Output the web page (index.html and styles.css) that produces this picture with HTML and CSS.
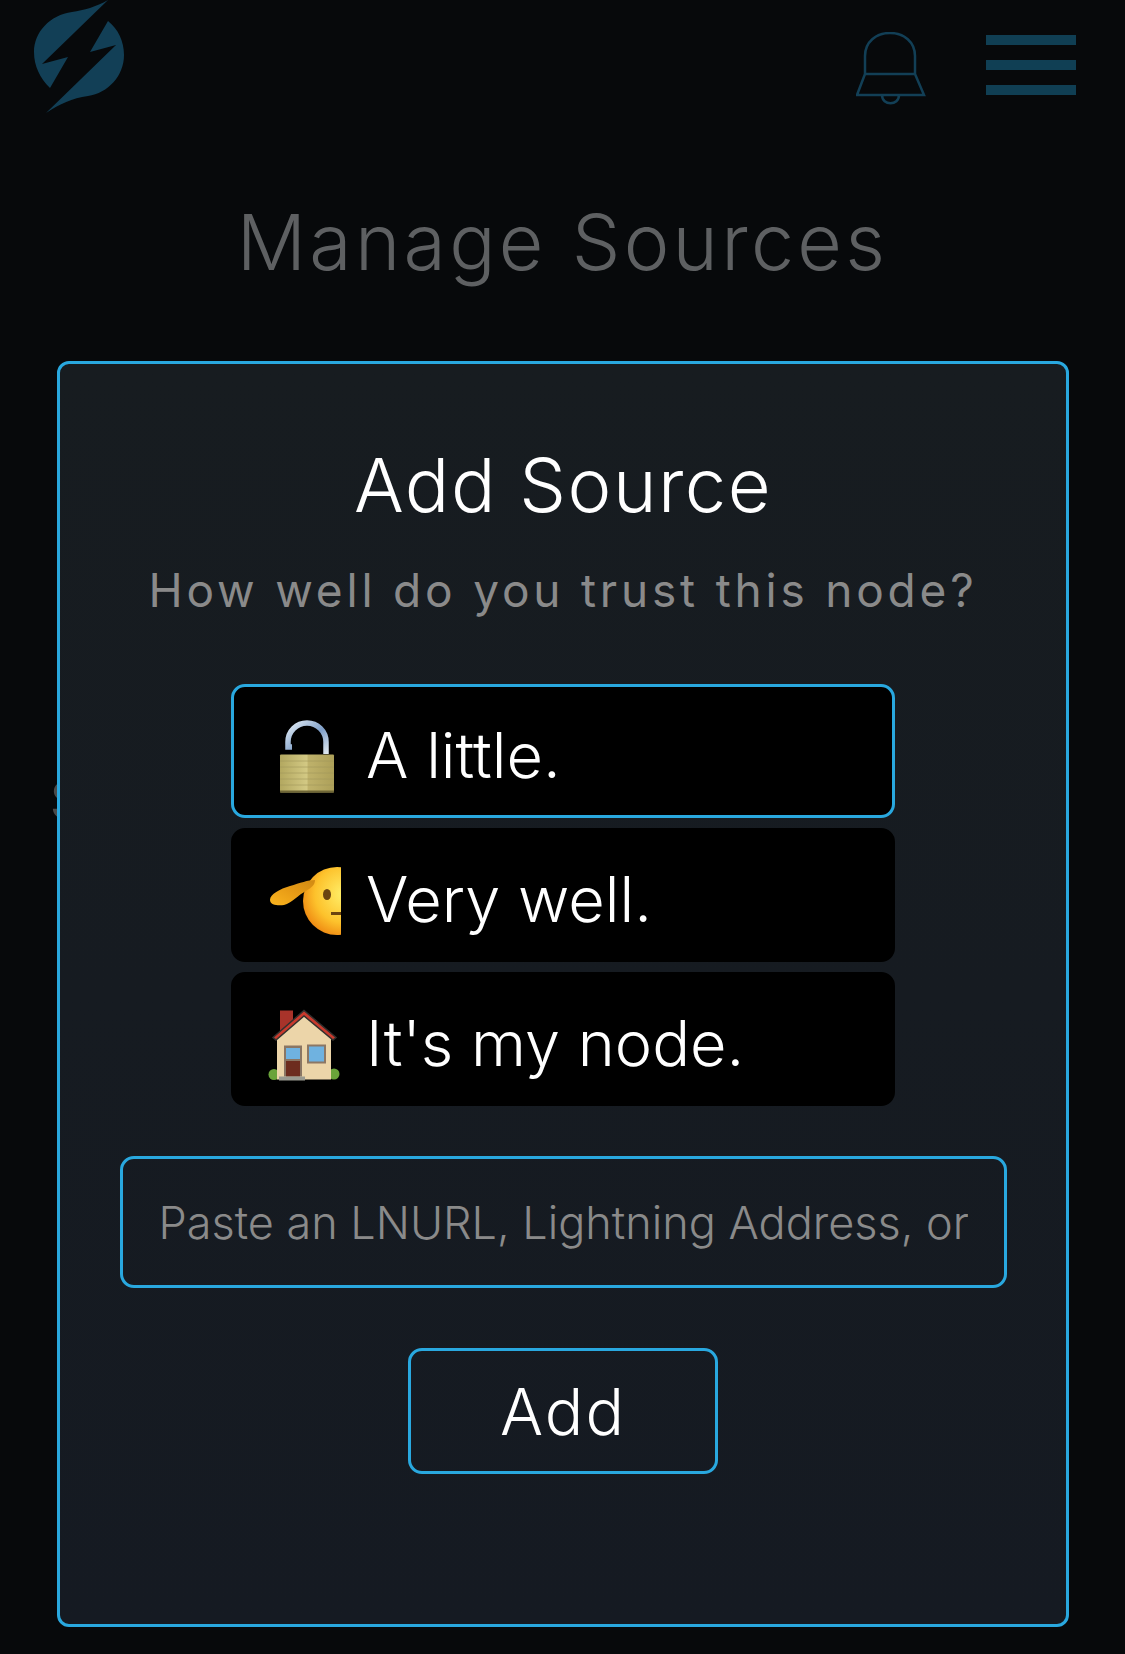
FILE: index.html
```html
<!DOCTYPE html>
<html lang="en">
<head>
<meta charset="utf-8">
<title>Manage Sources</title>
<link rel="stylesheet" href="styles.css">
</head>
<body>
<div class="app">
  <header class="topbar">
    <svg class="logo" viewBox="0 0 130 120" aria-hidden="true">
      <path class="brand-fill" d="M108 0 L42 64 L68 57 L50 88 C40 78 34 66 34 52 C34 32 50 15 72 12 C84 10 96 7 108 0 Z"/>
      <path class="brand-fill" d="M46 113 L116 45 L90 52 L108 21 C118 29 124 41 124 55 C124 76 108 93 88 96 C72 98 60 104 46 113 Z"/>
    </svg>
    <div class="top-actions">
      <svg class="bell" viewBox="0 0 70 74" aria-hidden="true">
        <path class="brand-line" d="M9 42 V24 C9 10 20 1 34 1 C48 1 59 10 59 24 V42 M9 42 H59 M9 42 L1 63 H68 L59 42 M26 63 C26 74 43 74 43 63"/>
      </svg>
      <div class="menu" aria-hidden="true"><span></span><span></span><span></span></div>
    </div>
  </header>
  <h1 class="page-title">Manage Sources</h1>
  <span class="peek">S</span>
  <section class="card">
    <h2 class="card-title">Add Source</h2>
    <p class="card-sub">How well do you trust this node?</p>
    <div class="options">
      <button class="option selected">
        <svg class="emoji" viewBox="0 0 76 76" aria-hidden="true">
          <defs>
            <linearGradient id="brass" x1="0" x2="1" y1="0" y2="0"><stop offset="0" stop-color="#b3a860"/><stop offset=".5" stop-color="#d3c984"/><stop offset=".52" stop-color="#bfb26b"/><stop offset="1" stop-color="#ada059"/></linearGradient>
            <linearGradient id="steel" x1="0" x2="1" y1="0" y2="1"><stop offset="0" stop-color="#e3edf6"/><stop offset=".55" stop-color="#7f9fc8"/><stop offset="1" stop-color="#dfe8f0"/></linearGradient>
          </defs>
          <path class="shackle" d="M22 30 H18 V25 A19 19 0 0 1 56 25 V37" stroke="url(#steel)"/>
          <rect x="10" y="37.500" width="54" height="38" rx="1" fill="url(#brass)"/>
          <path class="brass-lines" d="M10 44 H64 M10 50 H64 M10 56 H64 M10 62 H64 M10 68 H64"/>
          <rect x="10" y="73.500" width="54" height="2" fill="#6f6636"/>
        </svg>
        <span class="option-label">A little.</span>
      </button>
      <button class="option">
        <svg class="emoji" viewBox="0 0 76 76" aria-hidden="true">
          <defs>
            <radialGradient id="face" cx=".6" cy=".4" r=".65"><stop offset="0" stop-color="#fff06a"/><stop offset=".65" stop-color="#fdc22c"/><stop offset="1" stop-color="#ef8a12"/></radialGradient>
            <linearGradient id="hand" x1="0" x2="1" y1="1" y2="0"><stop offset="0" stop-color="#fbb51f"/><stop offset=".5" stop-color="#e89c16"/><stop offset="1" stop-color="#d08a13"/></linearGradient>
            <clipPath id="half"><rect x="0" y="0" width="71" height="76"/></clipPath>
          </defs>
          <g clip-path="url(#half)">
            <circle cx="67" cy="40" r="34" fill="url(#face)"/>
            <ellipse cx="57" cy="33.500" rx="4" ry="5.500" fill="#6b4310"/>
            <rect x="61" y="51" width="10" height="3" fill="#6b4310"/>
          </g>
          <path d="M45 19 C38 19 30 22 20 25 C10 28 0 33 0 39 C0 44 8 45 14 44 C22 42 28 34 36 30 C41 27 45 24 45 19 Z" fill="url(#hand)"/>
        </svg>
        <span class="option-label">Very well.</span>
      </button>
      <button class="option">
        <svg class="emoji" viewBox="0 0 76 76" aria-hidden="true">
          <circle cx="4" cy="69.500" r="5.500" fill="#6aa33a"/>
          <circle cx="64" cy="69" r="5.500" fill="#6aa33a"/>
          <rect x="10" y="5.500" width="13" height="20" fill="#a8332a"/>
          <path d="M7 30 L34 8 L61 30 V74.500 H7 Z" fill="#ecd5a9"/>
          <path d="M3 32.500 L34 5.500 L66 32.500 L63 35 L34 11 L6 35 Z" fill="#c93a2d" stroke="#33302e" stroke-width="1.500"/>
          <rect x="14" y="40.500" width="18" height="31" fill="#8a7664"/>
          <rect x="16" y="56" width="14" height="15.500" fill="#6d2c1e"/>
          <rect x="16" y="43" width="14" height="11" fill="#6fb2e0"/>
          <rect x="37" y="39.500" width="19" height="19" fill="#8c7764"/>
          <rect x="39" y="41.500" width="15" height="15" fill="#6fb2e0"/>
          <rect x="9" y="71.500" width="26" height="4" fill="#9a9a90"/>
        </svg>
        <span class="option-label">It's my node.</span>
      </button>
    </div>
    <input class="source-input" type="text" placeholder="Paste an LNURL, Lightning Address, or pubkey">
    <button class="add-btn">Add</button>
  </section>
</div>
</body>
</html>
```
FILE: styles.css
```css
* { box-sizing: border-box; }
html, body { margin: 0; padding: 0; }
body {
  background: #07090b;
  font-family: Inter, "Open Sans", sans-serif;
  color: #fff;
  height: 1654px;
  overflow: hidden;
}
.app { position: relative; display: flex; flex-direction: column; }
.topbar {
  height: 130px;
  display: flex;
  justify-content: space-between;
  align-items: flex-start;
  padding-right: 49px;
}
.logo { width: 130px; height: 120px; display: block; }
.brand-fill { fill: #123f56; }
.brand-line { fill: none; stroke: #123f56; stroke-width: 2.500; }
.top-actions { display: flex; align-items: flex-start; gap: 60px; padding-top: 32px; }
.bell { width: 70px; height: 74px; display: block; }
.menu { width: 90px; display: flex; flex-direction: column; gap: 15px; padding-top: 3px; }
.menu span { display: block; height: 10px; background: #103f54; }
.page-title {
  margin: 67px 0 0;
  height: 90px;
  line-height: 90px;
  text-align: center;
  font-size: 77px;
  font-weight: 300;
  color: #5e6062;
  letter-spacing: 3.300px;
}
.peek {
  position: absolute;
  left: 50px;
  top: 772px;
  font-size: 50px;
  line-height: 56px;
  color: #4a4a4a;
}
.card {
  position: relative;
  margin: 74px 56px 0 57px;
  width: 1012px;
  padding: 81px 0 150px;
  background: linear-gradient(#171c20, #151a22);
  border: 3px solid #29a8df;
  border-radius: 12px;
  display: flex;
  flex-direction: column;
  align-items: center;
}
.card-title {
  margin: 0;
  height: 80px;
  line-height: 80px;
  font-size: 74px;
  font-weight: 300;
  letter-spacing: 1.500px;
}
.card-sub {
  margin: 40px 0 0;
  height: 50px;
  line-height: 50px;
  font-size: 46px;
  font-weight: 400;
  letter-spacing: 3.800px;
  color: #8a8a8a;
}
.options {
  margin-top: 69px;
  width: 664px;
  display: flex;
  flex-direction: column;
  gap: 10px;
}
.option {
  height: 134px;
  display: flex;
  align-items: center;
  gap: 20px;
  padding: 7px 0 0 36px;
  background: #000;
  border: 3px solid #000;
  border-radius: 14px;
  color: #fff;
  font-family: inherit;
  font-size: 63px;
  font-weight: 300;
  letter-spacing: 0;
}
.option.selected { border-color: #29a8df; }
.emoji { width: 76px; height: 76px; flex: none; overflow: visible; }
.shackle { fill: none; stroke-width: 5.500; }
.brass-lines { stroke: #a2965a; stroke-width: 1; opacity: .6; fill: none; }
.source-input {
  margin-top: 50px;
  width: 887px;
  height: 132px;
  padding: 0 36px;
  background: transparent;
  border: 3px solid #29a8df;
  border-radius: 14px;
  color: #fff;
  font-family: inherit;
  font-size: 45px;
  font-weight: 300;
  outline: none;
}
.source-input::placeholder { color: #8a8a8a; opacity: 1; }
.add-btn {
  margin-top: 60px;
  width: 310px;
  height: 126px;
  background: transparent;
  border: 3px solid #29a8df;
  border-radius: 14px;
  color: #fff;
  font-family: inherit;
  font-size: 64px;
  font-weight: 300;
  letter-spacing: 2px;
}
```
